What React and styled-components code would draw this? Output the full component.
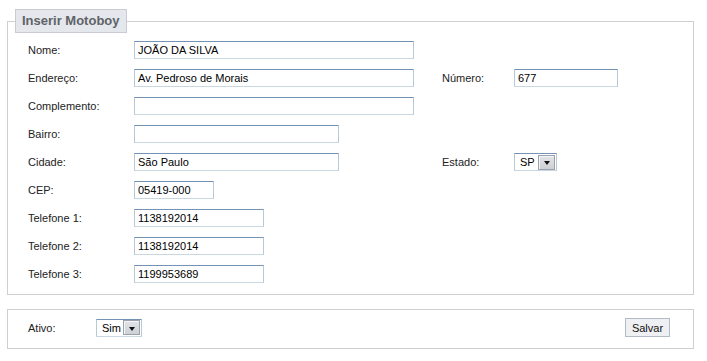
import React from 'react';
import styled, { createGlobalStyle } from 'styled-components';

const GlobalStyle = createGlobalStyle`
  body {
    margin: 0;
    background: #fff;
    font-family: 'Liberation Sans', Arial, sans-serif;
    font-size: 11px;
    color: #222;
  }
`;

const Page = styled.div`
  padding: 9px 0 0 7px;
`;

const Fieldset = styled.fieldset`
  box-sizing: border-box;
  width: 687px;
  margin: 0;
  padding: 0;
  border: 1px solid #cfcfcf;
  min-inline-size: 0;
`;

const Legend = styled.legend`
  margin-left: 7px;
  padding: 4px 6px 5px 6px;
  background: #e4e7ec;
  border: 1px solid #c9cdd3;
  font-size: 13px;
  font-weight: bold;
  line-height: 13px;
  color: #5f6368;
`;

const Form = styled.div`
  display: flex;
  flex-direction: column;
  gap: 10px;
  padding: 8px 0 11px 20px;
`;

const Row = styled.div`
  display: grid;
  grid-template-columns: 106px 308px 72px auto;
  align-items: center;
  height: 18px;
`;

const Label = styled.span`
  color: #222;
  white-space: nowrap;
`;

const Input = styled.div`
  box-sizing: border-box;
  width: ${({ $w }) => $w}px;
  height: 18px;
  padding: 0 3px;
  border: 1px solid;
  border-color: #7593b4 #b7c8d6 #c9d7e1 #b7c8d6;
  background: #fff;
  color: #000;
  line-height: 16px;
  white-space: nowrap;
  overflow: hidden;
`;

const Combo = styled.div`
  box-sizing: border-box;
  display: flex;
  align-items: center;
  justify-content: space-between;
  width: ${({ $w }) => $w}px;
  height: 18px;
  padding: 0 1px 0 5px;
  border: 1px solid;
  border-color: #7593b4 #b7c8d6 #c9d7e1 #b7c8d6;
  background: #fff;
  color: #000;
  font-size: 11px;
`;

const ComboButton = styled.span`
  box-sizing: border-box;
  display: flex;
  align-items: center;
  justify-content: center;
  width: 17px;
  height: 15px;
  border: 1px solid #9aa3ad;
  box-shadow: inset 1px 1px 0 #f4f4f4;
  background: linear-gradient(#e2e4e7, #cdd0d4);
`;

const Arrow = styled.span`
  width: 0;
  height: 0;
  margin-top: 2px;
  border-left: 3.5px solid transparent;
  border-right: 3.5px solid transparent;
  border-top: 4px solid #111;
`;

const Footer = styled.div`
  box-sizing: border-box;
  width: 687px;
  margin-top: 14px;
  display: flex;
  align-items: center;
  padding: 8px 23px 11px 20px;
  border: 1px solid #cfcfcf;
`;

const FooterLabel = styled(Label)`
  width: 68px;
`;

const Button = styled.button`
  box-sizing: border-box;
  margin-left: auto;
  width: 45px;
  height: 19px;
  padding: 0;
  border: 1px solid #b3bcc6;
  background: #eef0f3;
  font-family: 'Liberation Sans', Arial, sans-serif;
  font-size: 11px;
  color: #111;
`;

const Select = ({ value, width }) => (
  <Combo $w={width}>
    <span>{value}</span>
    <ComboButton>
      <Arrow />
    </ComboButton>
  </Combo>
);

const fields = [
  { label: 'Nome:', value: 'JOÃO DA SILVA', w: 280 },
  { label: 'Endereço:', value: 'Av. Pedroso de Morais', w: 280, extra: { label: 'Número:', value: '677', w: 104 } },
  { label: 'Complemento:', value: '', w: 280 },
  { label: 'Bairro:', value: '', w: 205 },
  { label: 'Cidade:', value: 'São Paulo', w: 205, extra: { label: 'Estado:', select: 'SP', w: 43 } },
  { label: 'CEP:', value: '05419-000', w: 80 },
  { label: 'Telefone 1:', value: '1138192014', w: 130 },
  { label: 'Telefone 2:', value: '1138192014', w: 130 },
  { label: 'Telefone 3:', value: '1199953689', w: 130 }
];

export default function App() {
  return (
    <Page>
      <GlobalStyle />
      <Fieldset>
        <Legend>Inserir Motoboy</Legend>
        <Form>
          {fields.map(f => (
            <Row key={f.label}>
              <Label>{f.label}</Label>
              <Input $w={f.w}>{f.value}</Input>
              {f.extra && <Label>{f.extra.label}</Label>}
              {f.extra &&
                (f.extra.select ? (
                  <Select value={f.extra.select} width={f.extra.w} />
                ) : (
                  <Input $w={f.extra.w}>{f.extra.value}</Input>
                ))}
            </Row>
          ))}
        </Form>
      </Fieldset>
      <Footer>
        <FooterLabel>Ativo:</FooterLabel>
        <Select value="Sim" width={46} />
        <Button>Salvar</Button>
      </Footer>
    </Page>
  );
}
